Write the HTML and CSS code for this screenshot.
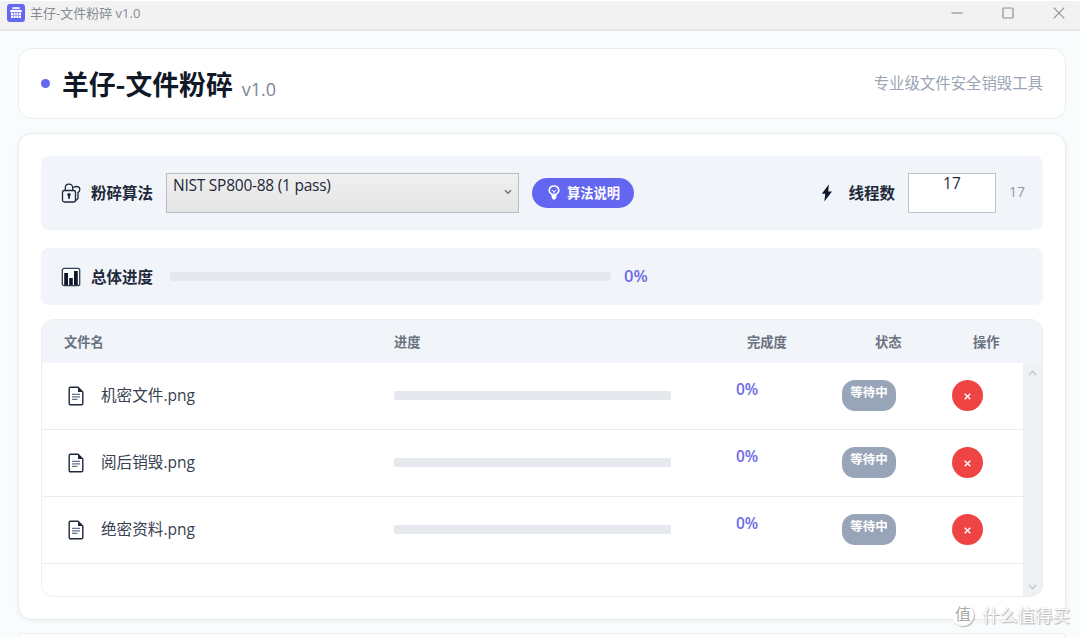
FILE: index.html
```html
<!DOCTYPE html>
<html lang="zh-CN">
<head>
    <meta charset="UTF-8">
    <meta name="viewport" content="width=device-width, initial-scale=1.0">
    <title>羊仔-文件粉碎 v1.0</title>
    <link rel="stylesheet" href="styles.css">
</head>
<body>
    <svg class="sprite" width="0" height="0">
        <symbol id="icon-file" viewBox="0 0 16 20">
            <path d="M2.5 1.2H10L14.8 6V17.5Q14.8 18.8 13.5 18.8H2.5Q1.2 18.8 1.2 17.5V2.5Q1.2 1.2 2.5 1.2Z" fill="none" stroke="#1e293b" stroke-width="1.4"/>
            <path d="M10 1V6H15Z" fill="#1e293b"/>
            <path d="M4 8.3H12M4 10.8H12M4 13.3H9.5" stroke="#64748b" stroke-width="1.3"/>
        </symbol>
    </svg>

    <div class="titlebar">
        <svg class="app-icon" width="18" height="18" viewBox="0 0 18 18">
            <rect width="18" height="18" rx="3" fill="#6366f1"/>
            <path d="M5.5 3H12.5L13 5.2H5Z" fill="#dfe0ff"/>
            <path d="M3.2 6H14.8V8.2H3.2ZM4 9H14V14H4Z" fill="#fff"/>
            <path d="M6.5 9V14M9 9V14M11.5 9V14M4 11.3H14" stroke="#8587f3" stroke-width=".8"/>
        </svg>
        <span class="window-title">羊仔-文件粉碎 v1.0</span>
        <div class="window-buttons">
            <svg width="12" height="12" viewBox="0 0 12 12"><path d="M.5 6H11.5"/></svg>
            <svg width="12" height="12" viewBox="0 0 12 12"><rect x="1" y="1" width="10" height="10" rx="1"/></svg>
            <svg width="12" height="12" viewBox="0 0 12 12"><path d="M.7 .7L11.3 11.3M11.3 .7L.7 11.3"/></svg>
        </div>
    </div>

    <div class="content">
        <div class="card header">
            <span class="dot"></span>
            <h1>羊仔-文件粉碎</h1>
            <span class="version">v1.0</span>
            <span class="slogan">专业级文件安全销毁工具</span>
        </div>

        <div class="card main">
            <div class="panel toolbar">
                <svg class="panel-icon" width="20" height="20" viewBox="0 0 20 20" fill="none" stroke="#1e293b" stroke-width="1.3">
                    <rect x="1.5" y="7.5" width="13" height="11.5" rx="2"/>
                    <path d="M4.3 7.5V5Q4.3 1.2 8 1.2T11.7 5V7.5"/>
                    <path d="M12.5 4.8Q13 3.5 15.5 3.5Q18.8 3.5 18.8 6.5Q18.8 8.5 17 9.5V15.5L14.8 17.5"/>
                    <path d="M8 11V15.8" stroke-width="1.8"/>
                    <circle cx="8" cy="11.8" r="1.1" fill="#1e293b"/>
                </svg>
                <span class="label">粉碎算法</span>
                <div class="select">
                    <span>NIST SP800-88 (1 pass)</span>
                    <svg width="8" height="6" viewBox="0 0 8 6"><path d="M1 1.2L4 4.2L7 1.2"/></svg>
                </div>
                <button class="info-button">
                    <svg width="12" height="15" viewBox="0 0 12 15">
                        <path d="M4.2 10.5V9.3Q1.2 7.8 1.2 5.2Q1.5 1 6 1T10.8 5.2Q10.8 7.8 7.8 9.3V10.5Z" fill="none" stroke="#fff" stroke-width="1.5"/>
                        <path d="M3.8 4.8L6 7L8.2 4.8M6 7V10" fill="none" stroke="#fff"/>
                        <path d="M3.8 9.5H8.2V13L7 14.5H5L3.8 13Z" fill="#fff"/>
                    </svg>
                    算法说明
                </button>
                <svg class="bolt" width="12" height="18" viewBox="0 0 12 18"><path d="M7.8 .5L.8 9.8H4.3L3.3 17.5L11 7.5H7.3Z" fill="#0f172a"/></svg>
                <span class="label">线程数</span>
                <div class="thread-input">17</div>
                <span class="thread-value">17</span>
            </div>

            <div class="panel overall">
                <svg class="panel-icon" width="20" height="20" viewBox="0 0 20 20">
                    <rect x="1.3" y="1.3" width="17.4" height="17.4" rx="2" fill="#f8fafc" stroke="#334155" stroke-width="1.3"/>
                    <path d="M3.2 6H7V18H3.2ZM8.2 11H11.8V18H8.2ZM13 4H16.8V18H13Z" fill="#0f172a"/>
                </svg>
                <span class="label">总体进度</span>
                <div class="bar"></div>
                <span class="percent">0%</span>
            </div>

            <div class="table">
                <div class="table-head">
                    <span>文件名</span>
                    <span>进度</span>
                    <span>完成度</span>
                    <span>状态</span>
                    <span>操作</span>
                </div>
                <div class="table-body">
                    <div class="rows">
                        <div class="row">
                            <div class="file"><svg width="16" height="20"><use href="#icon-file"/></svg>机密文件.png</div>
                            <div class="bar"></div>
                            <span class="percent">0%</span>
                            <span class="badge">等待中</span>
                            <button class="delete"><svg width="7" height="7" viewBox="0 0 7 7"><path d="M.7 .7L6.3 6.3M6.3 .7L.7 6.3"/></svg></button>
                        </div>
                        <div class="row">
                            <div class="file"><svg width="16" height="20"><use href="#icon-file"/></svg>阅后销毁.png</div>
                            <div class="bar"></div>
                            <span class="percent">0%</span>
                            <span class="badge">等待中</span>
                            <button class="delete"><svg width="7" height="7" viewBox="0 0 7 7"><path d="M.7 .7L6.3 6.3M6.3 .7L.7 6.3"/></svg></button>
                        </div>
                        <div class="row">
                            <div class="file"><svg width="16" height="20"><use href="#icon-file"/></svg>绝密资料.png</div>
                            <div class="bar"></div>
                            <span class="percent">0%</span>
                            <span class="badge">等待中</span>
                            <button class="delete"><svg width="7" height="7" viewBox="0 0 7 7"><path d="M.7 .7L6.3 6.3M6.3 .7L.7 6.3"/></svg></button>
                        </div>
                    </div>
                    <div class="scrollbar">
                        <svg width="9" height="6" viewBox="0 0 9 6"><path d="M1 5L4.5 1.3L8 5"/></svg>
                        <svg width="9" height="6" viewBox="0 0 9 6"><path d="M1 1L4.5 4.7L8 1"/></svg>
                    </div>
                </div>
            </div>
        </div>

        <div class="card footer"></div>
    </div>

    <div class="watermark">
        <span class="watermark-logo">值</span>
        <span>什么值得买</span>
    </div>
</body>
</html>
```
FILE: styles.css
```css
* {
    box-sizing: border-box;
}

body {
    display: flex;
    flex-direction: column;
    margin: 0;
    height: 100vh;
    background: #f8fcfd;
    color: #1e293b;
    font-family: "Open Sans", "Noto Sans CJK SC", sans-serif;
    line-height: 20px;
}

button {
    border: none;
    padding: 0;
    font-family: inherit;
    cursor: pointer;
}

.sprite {
    display: block;
}

.titlebar {
    display: flex;
    flex-shrink: 0;
    align-items: center;
    height: 31px;
    padding: 0 15px 4px 7px;
    background: #f2f2f2;
    border-top: 1px solid #fff;
    border-bottom: 2px solid #e4e5e6;
}

.window-title {
    margin-left: 5px;
    font-size: 13px;
    color: #868b94;
}

.window-buttons {
    display: flex;
    gap: 39px;
    margin-left: auto;
}

.window-buttons svg {
    fill: none;
    stroke: #8c939c;
    stroke-width: 1.2;
}

.content {
    display: flex;
    flex: 1;
    flex-direction: column;
    min-height: 0;
    padding: 17px 14px 0 18px;
}

.card {
    background: #fff;
    border: 1px solid #e9edf0;
    border-radius: 14px;
}

.header {
    display: flex;
    flex-shrink: 0;
    align-items: center;
    height: 71px;
    padding: 0 22px;
}

.dot {
    width: 9px;
    height: 9px;
    border-radius: 50%;
    background: #6366f1;
}

h1 {
    margin: 0 0 0 12px;
    font-family: "Noto Sans CJK SC", sans-serif;
    font-size: 26.8px;
    line-height: 36px;
    color: #111827;
}

.version {
    margin: 10px 0 0 9px;
    font-size: 18px;
    color: #7c8594;
}

.slogan {
    margin-left: auto;
    font-size: 15.4px;
    color: #9ba5b5;
}

.main {
    flex-shrink: 0;
    height: 487px;
    margin-top: 14px;
    padding: 22px;
    box-shadow: 0 1px 5px rgba(15, 23, 42, 0.06);
}

.panel {
    display: flex;
    align-items: center;
    background: #f1f4f9;
    border-radius: 8px;
    padding: 0 18px 0 20px;
}

.panel-icon {
    margin-right: 10px;
}

.label {
    font-size: 15.5px;
    font-weight: bold;
}

.toolbar {
    height: 74px;
}

.select {
    display: flex;
    justify-content: space-between;
    width: 353px;
    height: 40px;
    margin-left: 13px;
    padding: 1px 6px;
    border: 1px solid #b9bdc2;
    background: linear-gradient(#f0f0f0, #e4e4e4);
    font-size: 15.5px;
    letter-spacing: -0.25px;
}

.select svg {
    margin-top: 14px;
    fill: none;
    stroke: #6b7280;
    stroke-width: 1.5;
}

.info-button {
    display: flex;
    align-items: center;
    justify-content: center;
    gap: 7px;
    width: 102px;
    height: 30px;
    margin-left: 13px;
    padding: 0 0 2px 2px;
    border-radius: 15px;
    background: #6366f1;
    color: #fff;
    font-size: 13.3px;
    font-weight: bold;
}

.bolt {
    margin-left: auto;
    margin-right: 15px;
}

.thread-input {
    width: 88px;
    height: 40px;
    margin-left: 13px;
    border: 1px solid #bfc3c9;
    background: #fff;
    font-size: 15.5px;
    line-height: 18px;
    text-align: center;
}

.thread-value {
    margin: 0 0 2px 13px;
    font-size: 14px;
    color: #8d99ab;
}

.overall {
    height: 57px;
    margin-top: 18px;
}

.bar {
    height: 9px;
    border-radius: 2px;
    background: #e5e8ed;
}

.overall .bar {
    width: 441px;
    margin-left: 17px;
}

.percent {
    font-size: 15.5px;
    font-weight: 600;
    color: #6c6ce6;
}

.overall .percent {
    margin: 0 0 2px 13px;
    font-size: 16.5px;
}

.table {
    height: 278px;
    margin-top: 14px;
    border: 1px solid #ebeff3;
    border-radius: 12px;
    overflow: hidden;
}

.table-head {
    display: grid;
    grid-template-columns: 330px 353px 128px 98px auto;
    align-items: center;
    height: 43px;
    padding-left: 22px;
    background: #f1f4f9;
    font-size: 13.3px;
    font-weight: bold;
    color: #6b7280;
}

.table-body {
    display: flex;
    height: 234px;
}

.rows {
    flex: 1;
}

.row {
    display: grid;
    grid-template-columns: 326px 342px 106px 110px auto;
    align-items: center;
    height: 67px;
    padding: 0 0 1px 26px;
    border-bottom: 1px solid #e9edf0;
}

.file {
    display: flex;
    align-items: center;
    gap: 17px;
    margin-bottom: 2px;
    font-size: 15.6px;
    color: #374151;
}

.file svg {
    margin-top: 2px;
}

.row .bar {
    width: 277px;
}

.row .percent {
    margin-bottom: 14px;
}

.badge {
    width: 54px;
    height: 31px;
    padding-top: 3px;
    border-radius: 13px;
    background: #98a4b7;
    color: #fff;
    font-size: 12.5px;
    font-weight: bold;
    text-align: center;
}

.delete {
    display: flex;
    align-items: center;
    justify-content: center;
    width: 31px;
    height: 31px;
    border-radius: 50%;
    background: #ef4444;
}

.delete svg {
    margin-top: 1px;
    fill: none;
    stroke: #fff;
    stroke-width: 1.4;
}

.scrollbar {
    display: flex;
    flex-direction: column;
    align-items: center;
    justify-content: space-between;
    width: 19px;
    padding: 7px 0;
    background: #eff0f2;
}

.scrollbar svg {
    fill: none;
    stroke: #c3c6cb;
    stroke-width: 1.4;
}

.footer {
    flex: 1;
    margin-top: 13px;
    border-bottom: none;
    border-radius: 14px 14px 0 0;
}

.watermark {
    position: absolute;
    right: 10px;
    bottom: 10px;
    display: flex;
    align-items: center;
    gap: 8px;
    font-size: 17.6px;
    line-height: 24px;
    color: #fff;
    text-shadow: 1px 1px 1px #b0b0b0, 0 0 1px #bbb;
}

.watermark-logo {
    width: 22px;
    height: 22px;
    border-radius: 50%;
    background: #fff;
    box-shadow: 1px 1px 1px #b5b5b5;
    font-size: 16px;
    line-height: 21px;
    text-align: center;
    color: #aaa;
    text-shadow: none;
}
```
